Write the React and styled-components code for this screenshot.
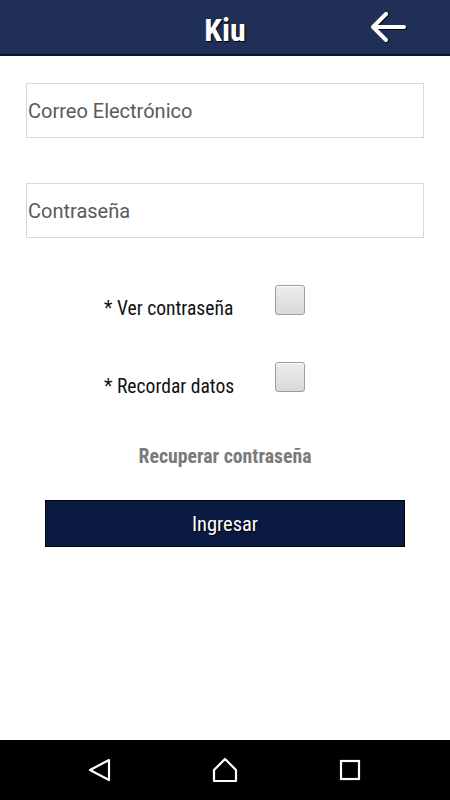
import React from "react";
import styled, { createGlobalStyle } from "styled-components";

const Global = createGlobalStyle`
  html, body { margin: 0; padding: 0; background: #fff; }
  body { font-family: Roboto, "Liberation Sans", sans-serif; }
  * { box-sizing: border-box; }
`;

const condensed = `"Roboto Condensed", "Liberation Sans Narrow", Roboto, sans-serif`;

const Screen = styled.div`
  width: 450px;
  height: 800px;
  display: flex;
  flex-direction: column;
  background: #fff;
  overflow: hidden;
`;

const Header = styled.header`
  height: 56px;
  flex: none;
  background: #1f2f56;
  border-bottom: 2px solid #0b1630;
  display: grid;
  grid-template-columns: 1fr auto 1fr;
  align-items: center;
`;

const Title = styled.h1`
  grid-column: 2;
  margin: 0;
  padding-top: 5px;
  color: #fff;
  font-family: ${condensed};
  font-stretch: condensed;
  font-weight: 700;
  font-size: 32px;
  text-shadow: 1px 1px 1px #000;
`;

const BackButton = styled.div`
  grid-column: 3;
  justify-self: end;
  margin-right: 44px;
  display: flex;
  filter: drop-shadow(1px 1px 0.5px rgba(0, 0, 0, 0.8));
`;

const Body = styled.main`
  flex: 1;
  display: flex;
  flex-direction: column;
  padding: 27px 26px 0 26px;
`;

const Field = styled.div`
  height: 55px;
  border: 1px solid #d8d8d8;
  display: flex;
  align-items: center;
  padding-left: 1px;
  margin-bottom: ${(p) => p.$mb || 0}px;
  color: #5a5a5a;
  font-family: Roboto, sans-serif;
  font-size: 20px;
`;

const CheckRow = styled.div`
  display: grid;
  grid-template-columns: 249px 30px;
  align-items: start;
  height: 30px;
  margin-bottom: ${(p) => p.$mb || 0}px;
`;

const CheckLabel = styled.span`
  justify-self: start;
  padding-left: 78px;
  padding-top: ${(p) => p.$pt}px;
  font-family: ${condensed};
  font-size: 19.6px;
  color: #111;
  white-space: nowrap;
`;

const CheckBox = styled.span`
  width: 30px;
  height: 30px;
  border: 1px solid #9e9e9e;
  border-radius: 3px;
  background: linear-gradient(#ececec, #d9d9d9);
  box-shadow: inset 0 1px 0 #fff;
`;

const Link = styled.div`
  text-align: center;
  color: #7a7a7a;
  font-family: ${condensed};
  font-weight: 700;
  font-size: 19.8px;
  margin-bottom: 32px;
`;

const Button = styled.div`
  margin: 0 19px;
  height: 47px;
  background: #0a1a42;
  border: 1px solid #000;
  display: flex;
  align-items: center;
  justify-content: center;
  color: #fff;
  font-family: ${condensed};
  font-size: 20.5px;
  text-shadow: 1px 1px 1px #000;
`;

const NavBar = styled.nav`
  height: 60px;
  flex: none;
  background: #000;
  display: grid;
  grid-template-columns: repeat(3, 1fr);
  align-items: center;
  justify-items: center;
  padding: 0 37px;
`;

export default function App() {
  return (
    <Screen>
      <Global />
      <Header>
        <Title>Kiu</Title>
        <BackButton>
          <svg width="36" height="32" viewBox="0 0 36 32">
            <path
              d="M34 16H4M16 3L3 16l13 13"
              fill="none"
              stroke="#fff"
              strokeWidth="4"
              strokeLinecap="round"
              strokeLinejoin="round"
            />
          </svg>
        </BackButton>
      </Header>
      <Body>
        <Field $mb={45}>Correo Electrónico</Field>
        <Field $mb={47}>Contraseña</Field>
        <CheckRow $mb={47}>
          <CheckLabel $pt={12}>* Ver contraseña</CheckLabel>
          <CheckBox />
        </CheckRow>
        <CheckRow $mb={53}>
          <CheckLabel $pt={13}>* Recordar datos</CheckLabel>
          <CheckBox />
        </CheckRow>
        <Link>Recuperar contraseña</Link>
        <Button>Ingresar</Button>
      </Body>
      <NavBar>
        <svg width="24" height="24" viewBox="0 0 24 24">
          <path d="M21 2L2 12l19 10z" fill="none" stroke="#fff" strokeWidth="2.2" strokeLinejoin="round" />
        </svg>
        <svg width="26" height="26" viewBox="0 0 26 26">
          <path d="M13 2L2 13v11h22V13z" fill="none" stroke="#fff" strokeWidth="2.2" strokeLinejoin="round" />
        </svg>
        <svg width="22" height="22" viewBox="0 0 22 22">
          <rect x="2" y="2" width="18" height="18" fill="none" stroke="#fff" strokeWidth="2.2" />
        </svg>
      </NavBar>
    </Screen>
  );
}
